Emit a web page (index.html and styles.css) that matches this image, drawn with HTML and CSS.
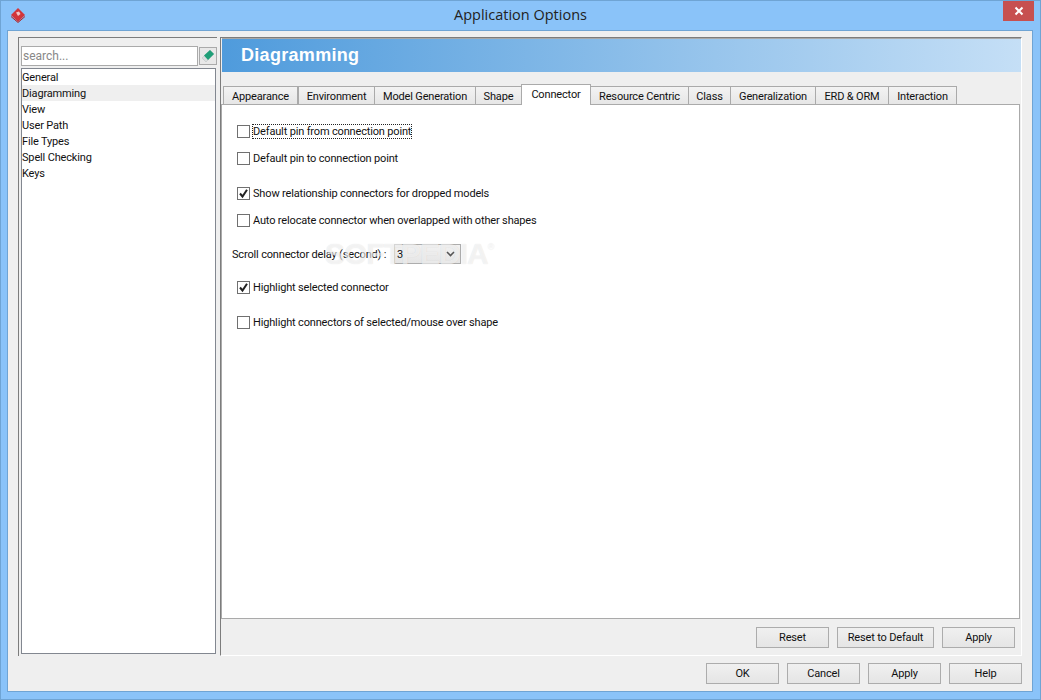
FILE: index.html
```html
<!DOCTYPE html>
<html lang="en">
<head>
<meta charset="utf-8">
<title>Application Options</title>
<link rel="stylesheet" href="styles.css">
</head>
<body>
<div class="window">
  <header class="titlebar">
    <svg class="app-icon" viewBox="0 0 16 16" width="16" height="16"><path d="M8 1 15 8 8 15 1 8Z" fill="#d2353a"/><path d="M1 9.500 8 15.500 15 9.500" fill="none" stroke="#a82a30"/><path d="M6 5.500 9 4.500 10.500 7 8 9Z" fill="#f3c5c5"/></svg>
    <div class="title">Application Options</div>
    <div class="close"><svg viewBox="0 0 10 10" width="10" height="10"><path d="M1.500 1.500 8.500 8.500M8.500 1.500 1.500 8.500" stroke="#fff" stroke-width="2"/></svg></div>
  </header>
  <div class="client">
    <div class="main">
      <aside class="left">
        <div class="search-row">
          <div class="search">search...</div>
          <div class="search-btn"><svg viewBox="0 0 14 14" width="14" height="14"><path d="M1 9 5 13 13 5 9 1Z" fill="#d9dede" stroke="#b8bebe" stroke-width=".5"/><path d="M3 6.500 9 1 13 5 7 11Z" fill="#1f9f78"/></svg></div>
        </div>
        <ul class="tree">
          <li>General</li>
          <li class="current">Diagramming</li>
          <li>View</li>
          <li>User Path</li>
          <li>File Types</li>
          <li>Spell Checking</li>
          <li>Keys</li>
        </ul>
      </aside>
      <section class="right">
        <div class="banner">Diagramming</div>
        <div class="tabs">
          <div class="tab t1">Appearance</div>
          <div class="tab t2">Environment</div>
          <div class="tab t3">Model Generation</div>
          <div class="tab t4">Shape</div>
          <div class="tab t5 active">Connector</div>
          <div class="tab t6">Resource Centric</div>
          <div class="tab t7">Class</div>
          <div class="tab t8">Generalization</div>
          <div class="tab t9">ERD &amp; ORM</div>
          <div class="tab t10">Interaction</div>
        </div>
        <div class="pane">
          <div class="opt o1"><span class="box"></span><span class="focus">Default pin from connection point</span></div>
          <div class="opt o2"><span class="box"></span><span>Default pin to connection point</span></div>
          <div class="opt o3"><span class="box"><svg viewBox="0 0 11 11" width="11" height="11"><path d="M2 5.500 4.500 8.500 9 1.800" fill="none" stroke="#222" stroke-width="2"/></svg></span><span>Show relationship connectors for dropped models</span></div>
          <div class="opt o2"><span class="box"></span><span>Auto relocate connector when overlapped with other shapes</span></div>
          <div class="delay"><span class="delay-label">Scroll connector delay (second) :</span>
            <div class="select"><span>3</span><svg viewBox="0 0 9 6" width="9" height="6"><path d="M1 1 4.500 4.500 8 1" fill="none" stroke="#555" stroke-width="1.600"/></svg></div>
          </div>
          <div class="opt o6"><span class="box"><svg viewBox="0 0 11 11" width="11" height="11"><path d="M2 5.500 4.500 8.500 9 1.800" fill="none" stroke="#222" stroke-width="2"/></svg></span><span>Highlight selected connector</span></div>
          <div class="opt o3"><span class="box"></span><span>Highlight connectors of selected/mouse over shape</span></div>
          <div class="watermark">SOFTPEDIA<sup class="reg">®</sup></div>
        </div>
        <div class="pane-actions">
          <div class="btn">Reset</div>
          <div class="btn b-long">Reset to Default</div>
          <div class="btn">Apply</div>
        </div>
      </section>
    </div>
    <footer class="dialog-actions">
      <div class="btn">OK</div>
      <div class="btn">Cancel</div>
      <div class="btn">Apply</div>
      <div class="btn">Help</div>
    </footer>
  </div>
</div>
</body>
</html>
```
FILE: styles.css
```css
html, body { margin: 0; padding: 0; }
body { width: 1041px; height: 700px; overflow: hidden; font-family: Roboto, "Liberation Sans", sans-serif; font-size: 11px; letter-spacing: -.16px; color: #111; }
.window { box-sizing: border-box; width: 1041px; height: 700px; background: #8ac3f9; border: 1px solid #6fa4d4; display: flex; flex-direction: column; padding: 0 7px 7px 6px; }
.titlebar { height: 29px; display: flex; align-items: center; position: relative; flex: none; }
.app-icon { margin: 0 0 1px 3px; }
.title { position: absolute; left: 1px; right: 0; top: 4px; text-align: center; font-family: "Open Sans", sans-serif; font-size: 14.5px; letter-spacing: 0; line-height: 20px; color: #222; }
.close { position: absolute; right: -1px; top: 0; width: 31px; height: 20px; background: #c75050; display: flex; align-items: center; justify-content: center; }
.client { flex: 1; background: #efefef; border: 1px solid #6fa4d4; display: flex; flex-direction: column; min-height: 0; padding: 6px 0 0 10px; }
.main { display: flex; height: 619px; flex: none; }
.left { box-sizing: border-box; width: 199px; flex: none; border: solid #7c7c7c; border-width: 1px 0 0 1px; padding: 8px 0 1px 2px; display: flex; flex-direction: column; }
.search-row { display: flex; gap: 1px; height: 20px; flex: none; align-items: center; }
.search { box-sizing: border-box; width: 177px; height: 20px; flex: none; background: #fff; border: 1px solid #aaa; color: #888; padding-left: 1px; line-height: 18px; font-size: 12px; letter-spacing: 0; }
.search-btn { box-sizing: border-box; width: 18px; height: 18px; flex: none; border: 1px solid #aaa; background: #e8e8e8; display: flex; align-items: center; justify-content: center; }
.tree { list-style: none; margin: 2px 0 1px; padding: 0; width: 195px; box-sizing: border-box; flex: 1; background: #fff; border: 1px solid #828790; }
.tree li { height: 16px; line-height: 18px; }
.tree .current { background: #efefef; }
.right { width: 800px; margin-left: 3px; display: flex; flex-direction: column; border-left: 1px solid #7c7c7c; border-top: 1px solid #7c7c7c; border-right: 1px solid #fff; border-bottom: 1px solid #fff; }
.banner { height: 33px; margin-left: 1px; flex: none; border-top: 1px solid #a8a8a8; background: linear-gradient(90deg, #4f9bdc, #c5dff6); color: #fff; font: bold 18px/32px "Liberation Sans", sans-serif; padding-left: 19px; letter-spacing: .3px; }
.tabs { display: flex; height: 32px; box-sizing: border-box; padding: 14px 0 0 2px; flex: none; align-items: flex-end; }
.tab { box-sizing: border-box; height: 18px; border: 1px solid #aaa; border-bottom: 0; margin-left: -1px; background: linear-gradient(#f3f3f3, #e6e6e6); text-align: center; line-height: 20px; }
.tab.active { height: 21px; background: #fff; position: relative; z-index: 1; margin-bottom: -1px; line-height: 20px; }
.t1 { width: 75px; margin-left: 0; } .t2 { width: 77px; margin-left: 0; } .t3 { width: 102px; } .t4 { width: 47px; } .t5 { width: 70px; } .t6 { width: 99px; } .t7 { width: 43px; } .t8 { width: 86px; } .t9 { width: 74px; } .t10 { width: 69px; }
.pane { position: relative; box-sizing: border-box; width: 799px; height: 515px; flex: none; background: #fff; border: 1px solid #aaa; padding: 0 0 0 15px; }
.opt { display: flex; align-items: center; height: 14px; gap: 3px; }
.o1 { margin-top: 19px; } .o2 { margin-top: 13px; } .o3 { margin-top: 21px; } .o6 { margin-top: 16px; }
.box { box-sizing: border-box; width: 13px; height: 13px; border: 1px solid #707070; background: #fff; flex: none; display: flex; }
.focus { outline: 1px dotted #222; }
.delay { display: flex; align-items: center; height: 20px; margin: 17px 0 0 -5px; gap: 6px; }
.delay-label { width: 156px; white-space: nowrap; flex: none; }
.select { box-sizing: border-box; width: 67px; height: 20px; border: 1px solid #adadad; background: linear-gradient(#f2f2f2, #e5e5e5); display: flex; align-items: center; justify-content: space-between; padding: 0 5px 0 2px; }
.watermark { position: absolute; left: 103px; top: 133px; font: bold 30px/32px "Liberation Sans", sans-serif; letter-spacing: -1px; color: rgba(255,255,255,.6); text-shadow: 0 0 1px rgba(0,0,0,.12); }
.reg { font-size: 9px; font-weight: normal; line-height: 0; vertical-align: 14px; }
.pane-actions { display: flex; justify-content: flex-end; gap: 8px; padding: 8px 6px 0 0; }
.btn { box-sizing: border-box; width: 73px; height: 21px; border: 1px solid #acacac; background: linear-gradient(#f0f0f0, #e5e5e5); text-align: center; line-height: 19px; }
.b-long { width: 97px; }
.dialog-actions { display: flex; justify-content: flex-end; gap: 8px; padding: 7px 10px 0 0; }
```
